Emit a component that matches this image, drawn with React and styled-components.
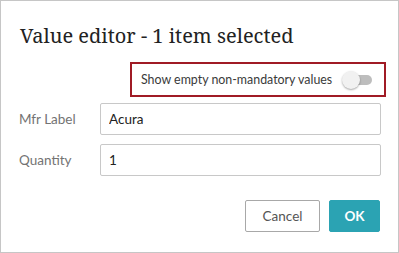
import React, { useState } from "react";
import styled, { createGlobalStyle } from "styled-components";

const GlobalStyle = createGlobalStyle`
  html, body {
    margin: 0;
    padding: 0;
    background: #ffffff;
  }
  * {
    box-sizing: border-box;
  }
`;

const Dialog = styled.div`
  width: 399px;
  height: 253px;
  border: 1px solid #c6c6c6;
  background: #ffffff;
  padding: 0 12px 0 17px;
  font-family: Lato, "Noto Sans", sans-serif;
  display: flex;
  flex-direction: column;
`;

const Title = styled.h2`
  margin: 21px 0 0 2px;
  font-family: "Noto Serif", "DejaVu Serif", "Liberation Serif", serif;
  font-weight: normal;
  font-size: 20px;
  line-height: 28px;
  color: #222222;
`;

const ToggleRow = styled.div`
  display: flex;
  justify-content: flex-end;
  margin-top: 12px;
`;

const Highlight = styled.div`
  width: 256px;
  height: 35px;
  border: 2px solid #a01b25;
  display: flex;
  align-items: center;
  justify-content: space-between;
  padding: 0 12px 0 9px;
`;

const ToggleLabel = styled.span`
  font-size: 12.4px;
  white-space: nowrap;
  color: #3a3a3a;
`;

const Switch = styled.button`
  position: relative;
  width: 30px;
  height: 18px;
  padding: 0;
  border: none;
  background: transparent;
  cursor: pointer;

  &::before {
    content: "";
    position: absolute;
    left: 4px;
    right: 0;
    top: 4px;
    height: 10px;
    border-radius: 5px;
    background: ${(p) => (p.$on ? "#7fcbd5" : "#bdbdbd")};
  }

  &::after {
    content: "";
    position: absolute;
    top: 0;
    left: ${(p) => (p.$on ? "12px" : "0")};
    width: 18px;
    height: 18px;
    border-radius: 50%;
    background: ${(p) => (p.$on ? "#2ba3b3" : "#f1f1f1")};
    box-shadow: 0 1px 2px rgba(0, 0, 0, 0.35);
  }
`;

const Fields = styled.div`
  display: grid;
  grid-template-columns: 82px 281px;
  row-gap: 9px;
  margin-top: 6px;
  align-items: center;
`;

const Label = styled.label`
  font-size: 13.5px;
  color: #737373;
  padding-left: 1px;
`;

const Input = styled.input`
  height: 32px;
  width: 100%;
  border: 1px solid #c8c8c8;
  border-radius: 2px;
  padding: 0 8px;
  font-family: inherit;
  font-size: 13.5px;
  color: #222222;
  outline: none;
`;

const Footer = styled.div`
  display: flex;
  justify-content: flex-end;
  gap: 9px;
  margin-top: 24px;
  padding-right: 6px;
`;

const Button = styled.button`
  height: 32px;
  min-width: ${(p) => (p.$primary ? "51px" : "75px")};
  padding: 0 14px;
  border-radius: 2px;
  font-family: inherit;
  font-size: 13.5px;
  font-weight: ${(p) => (p.$primary ? "bold" : "normal")};
  border: 1px solid ${(p) => (p.$primary ? "#2ba3b3" : "#a8a8a8")};
  background: ${(p) => (p.$primary ? "#2ba3b3" : "#ffffff")};
  color: ${(p) => (p.$primary ? "#ffffff" : "#555555")};
  cursor: pointer;
`;

export default function App() {
  const [showEmpty, setShowEmpty] = useState(false);
  return (
    <>
      <GlobalStyle />
      <Dialog>
        <Title>Value editor - 1 item selected</Title>
        <ToggleRow>
          <Highlight>
            <ToggleLabel>Show empty non-mandatory values</ToggleLabel>
            <Switch
              type="button"
              aria-label="Show empty non-mandatory values"
              $on={showEmpty}
              onClick={() => setShowEmpty(!showEmpty)}
            />
          </Highlight>
        </ToggleRow>
        <Fields>
          <Label htmlFor="mfr">Mfr Label</Label>
          <Input id="mfr" defaultValue="Acura" />
          <Label htmlFor="qty">Quantity</Label>
          <Input id="qty" defaultValue="1" />
        </Fields>
        <Footer>
          <Button type="button">Cancel</Button>
          <Button type="button" $primary>
            OK
          </Button>
        </Footer>
      </Dialog>
    </>
  );
}
